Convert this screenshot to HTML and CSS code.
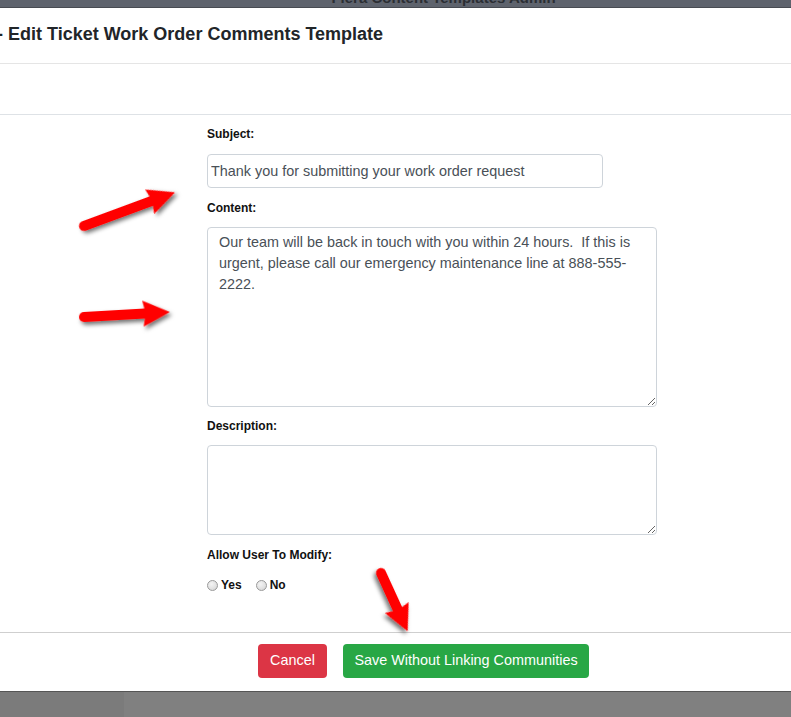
FILE: index.html
```html
<!DOCTYPE html>
<html>
<head>
<meta charset="utf-8">
<link rel="stylesheet" href="styles.css">
</head>
<body>
<div class="page">
  <div class="topbar"><span class="topbar-title">Flera Content Templates Admin</span></div>
  <div class="modal-header"><h4 class="modal-title">- Edit Ticket Work Order Comments Template</h4></div>
  <div class="modal-sub"></div>
  <div class="modal-body">
    <label class="field-label">Subject:</label>
    <input class="form-input" type="text" value="Thank you for submitting your work order request">
    <label class="field-label content-label">Content:</label>
    <textarea class="form-area content-area">Our team will be back in touch with you within 24 hours.  If this is urgent, please call our emergency maintenance line at 888-555-2222.</textarea>
    <label class="field-label desc-label">Description:</label>
    <textarea class="form-area desc-area"></textarea>
    <label class="field-label allow-label">Allow User To Modify:</label>
    <div class="radio-row">
      <label class="radio-opt"><input type="radio" name="allow" class="radio"> Yes</label>
      <label class="radio-opt"><input type="radio" name="allow" class="radio"> No</label>
    </div>
  </div>
  <div class="modal-footer">
    <button class="btn btn-cancel">Cancel</button>
    <button class="btn btn-save">Save Without Linking Communities</button>
  </div>
  <div class="bottom-bar"><div class="bottom-left"></div><div class="bottom-right"></div></div>

  <svg class="arrows" width="791" height="717" viewBox="0 0 791 717">
    <defs>
      <filter id="sh" x="-30%" y="-30%" width="160%" height="160%">
        <feDropShadow dx="2" dy="3" stdDeviation="2" flood-color="#000" flood-opacity="0.55"/>
      </filter>
    </defs>
    <g filter="url(#sh)" transform="translate(84 226) rotate(-20.3)">
      <line x1="0" y1="0" x2="76" y2="0" stroke="#f00" stroke-width="10" stroke-linecap="round"/>
      <polygon points="72,-4 70,-13 97,0 70,13 72,4" fill="#f00"/>
    </g>
    <g filter="url(#sh)" transform="translate(84 317) rotate(-3.3)">
      <line x1="0" y1="0" x2="65" y2="0" stroke="#f00" stroke-width="10" stroke-linecap="round"/>
      <polygon points="61,-4 59,-13 86,0 59,13 61,4" fill="#f00"/>
    </g>
    <g filter="url(#sh)" transform="translate(381 573) rotate(65.4)">
      <line x1="0" y1="0" x2="44" y2="0" stroke="#f00" stroke-width="10" stroke-linecap="round"/>
      <polygon points="40,-4 38,-13 64,0 38,13 40,4" fill="#f00"/>
    </g>
  </svg>
</div>
</body>
</html>
```
FILE: styles.css
```css
* { box-sizing: border-box; }
html, body { margin: 0; padding: 0; background: #fff; }
body {
  font-family: "Liberation Sans", Arial, sans-serif;
  color: #212529;
}
.page {
  position: relative;
  width: 791px;
  height: 717px;
  overflow: hidden;
  display: flex;
  flex-direction: column;
}
.topbar {
  height: 8px;
  flex: none;
  background: #5e636d;
  border-bottom: 1px solid #474b52;
  overflow: hidden;
  text-align: center;
  padding-left: 96px;
}
.topbar-title {
  display: block;
  margin-top: -10px;
  font-size: 15px;
  font-weight: bold;
  line-height: 16px;
  color: #2b2e33;
}
.modal-header {
  height: 56px;
  flex: none;
  border-bottom: 1px solid #e5e5e5;
  padding-top: 15px;
}
.modal-title {
  margin: 0 0 0 -3px;
  font-size: 18px;
  font-weight: bold;
  line-height: 22px;
  color: #212529;
}
.modal-sub {
  height: 51px;
  flex: none;
  border-bottom: 1px solid #dee2e6;
}
.modal-body {
  height: 517px;
  flex: none;
  padding: 12px 0 0 207px;
  display: flex;
  flex-direction: column;
  align-items: flex-start;
}
.field-label {
  display: block;
  font-size: 12px;
  font-weight: bold;
  line-height: 14px;
  color: #111;
  margin-bottom: 13px;
}
.form-input {
  width: 396px;
  height: 34px;
  border: 1px solid #ced4da;
  border-radius: 4px;
  padding: 0 3px;
  font-family: "Liberation Sans", Arial, sans-serif;
  font-size: 14.4px;
  color: #495057;
  margin: 0 0 13px;
  outline: none;
}
.form-area {
  width: 450px;
  border: 1px solid #ced4da;
  border-radius: 4px;
  padding: 4px 11px;
  font-family: "Liberation Sans", Arial, sans-serif;
  font-size: 14.4px;
  line-height: 21px;
  color: #495057;
  margin: 0;
  outline: none;
  resize: both;
}
.content-label { margin-bottom: 12px; }
.content-area { height: 180px; }
.desc-label { margin-top: 12px; margin-bottom: 12px; }
.desc-area { height: 90px; }
.allow-label { margin-top: 13px; margin-bottom: 15px; }
.radio-row {
  display: flex;
  gap: 14px;
  font-size: 12px;
  font-weight: bold;
  line-height: 16px;
  color: #111;
}
.radio-opt {
  display: flex;
  align-items: center;
}
.radio {
  appearance: none;
  -webkit-appearance: none;
  width: 11px;
  height: 11px;
  margin: 0 3px 0 0;
  border: 1px solid #9a9a9a;
  border-radius: 50%;
  background: radial-gradient(circle at 40% 35%, #f4f4f4 0%, #e2e2e2 55%, #cfcfcf 100%);
}
.modal-footer {
  flex: none;
  border-top: 1px solid #cfcfcf;
  padding: 11px 0 13px 258px;
  display: flex;
  gap: 16px;
}
.btn {
  height: 34px;
  border: none;
  border-radius: 4px;
  padding: 0 0 2px;
  font-family: "Liberation Sans", Arial, sans-serif;
  font-size: 14.4px;
  color: #fff;
  white-space: nowrap;
}
.btn-cancel { background: #dc3545; width: 69px; }
.btn-save { background: #28a745; width: 246px; }
.bottom-bar {
  flex: 1;
  display: flex;
  border-top: 1px solid #555;
}
.bottom-left { width: 124px; background: #7b7b7b; }
.bottom-right { flex: 1; background: #808080; }
.arrows {
  position: absolute;
  left: 0;
  top: 0;
  pointer-events: none;
}
```
